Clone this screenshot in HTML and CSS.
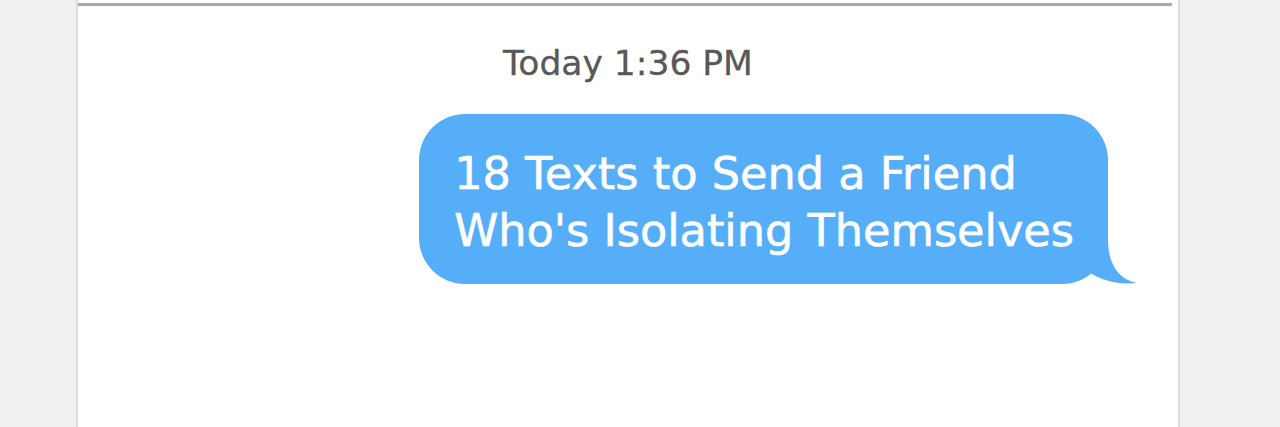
FILE: index.html
```html
<!DOCTYPE html>
<html>
<head>
<meta charset="utf-8">
<link rel="stylesheet" href="styles.css">
</head>
<body>
<div class="panel">
  <div class="topline"></div>
  <div class="stamp">Today 1:36 PM</div>
  <div class="row">
    <div class="bubble">
      18 Texts to Send a Friend<br>Who's Isolating Themselves
      <svg class="tail" width="80" height="55" viewBox="0 0 80 55"><path d="M48 0 V10 C48 35 58 50 77 54 C60 56 40 52 28 42 L20 20 Z" fill="#56aef9"/></svg>
    </div>
  </div>
</div>
</body>
</html>
```
FILE: styles.css
```css
html, body {
  margin: 0;
  padding: 0;
  height: 100%;
}
body {
  background: #f1f1f1;
  font-family: "DejaVu Sans", Verdana, sans-serif;
  overflow: hidden;
}
.panel {
  margin-left: 76px;
  width: 1100px;
  min-height: 100%;
  background: #ffffff;
  border-left: 2px solid #dddddd;
  border-right: 2px solid #dddddd;
  padding-top: 3px;
}
.topline {
  height: 3px;
  margin-right: 6px;
  background: #aaaaaa;
  box-shadow: 0 0 1px #bbbbbb;
}
.stamp {
  margin-top: 37px;
  text-align: center;
  font-size: 34.5px;
  line-height: 40px;
  color: #585858;
  -webkit-text-stroke: 0.3px #585858;
}
.row {
  display: flex;
  justify-content: flex-end;
  padding-right: 70px;
  margin-top: 31px;
}
.bubble {
  position: relative;
  background: #56aef9;
  color: #ffffff;
  font-size: 44.6px;
  line-height: 57px;
  padding: 32px 34px 24px 35px;
  border-radius: 46px;
  white-space: nowrap;
  -webkit-text-stroke: 0.6px #ffffff;
}
.tail {
  position: absolute;
  right: -32px;
  bottom: 0;
}
```
